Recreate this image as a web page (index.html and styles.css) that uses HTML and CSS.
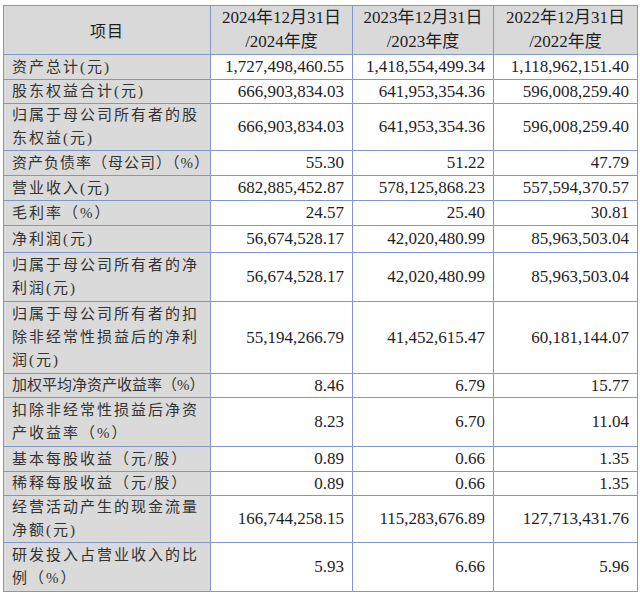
FILE: index.html
```html
<!DOCTYPE html>
<html lang="zh-CN">
<head>
<meta charset="utf-8">
<title>主要财务数据</title>
<link rel="stylesheet" href="styles.css">
</head>
<body>
<div class="page">
<table class="fin">
  <colgroup>
    <col class="c-item">
    <col class="c-num">
    <col class="c-num2">
    <col class="c-num3">
  </colgroup>
  <thead>
    <tr class="head-row">
      <th class="th-item">项目</th>
      <th class="th-year">2024年12月31日<br>/2024年度</th>
      <th class="th-year">2023年12月31日<br>/2023年度</th>
      <th class="th-year">2022年12月31日<br>/2022年度</th>
    </tr>
  </thead>
  <tbody>
    <tr class="h25"><td class="item">资产总计(元)</td><td class="num">1,727,498,460.55</td><td class="num">1,418,554,499.34</td><td class="num">1,118,962,151.40</td></tr>
    <tr class="h23"><td class="item">股东权益合计(元)</td><td class="num">666,903,834.03</td><td class="num">641,953,354.36</td><td class="num">596,008,259.40</td></tr>
    <tr class="h45"><td class="item">归属于母公司所有者的股<br>东权益(元)</td><td class="num">666,903,834.03</td><td class="num">641,953,354.36</td><td class="num">596,008,259.40</td></tr>
    <tr class="h25"><td class="item tight1">资产负债率（母公司）（%）</td><td class="num">55.30</td><td class="num">51.22</td><td class="num">47.79</td></tr>
    <tr class="h25"><td class="item">营业收入(元)</td><td class="num">682,885,452.87</td><td class="num">578,125,868.23</td><td class="num">557,594,370.57</td></tr>
    <tr class="h25"><td class="item">毛利率（%）</td><td class="num">24.57</td><td class="num">25.40</td><td class="num">30.81</td></tr>
    <tr class="h27"><td class="item">净利润(元)</td><td class="num">56,674,528.17</td><td class="num">42,020,480.99</td><td class="num">85,963,503.04</td></tr>
    <tr class="h49"><td class="item">归属于母公司所有者的净<br>利润(元)</td><td class="num">56,674,528.17</td><td class="num">42,020,480.99</td><td class="num">85,963,503.04</td></tr>
    <tr class="h72"><td class="item">归属于母公司所有者的扣<br>除非经常性损益后的净利<br>润(元)</td><td class="num">55,194,266.79</td><td class="num">41,452,615.47</td><td class="num">60,181,144.07</td></tr>
    <tr class="h24"><td class="item tight0">加权平均净资产收益率（%）</td><td class="num">8.46</td><td class="num">6.79</td><td class="num">15.77</td></tr>
    <tr class="h49"><td class="item">扣除非经常性损益后净资<br>产收益率（%）</td><td class="num">8.23</td><td class="num">6.70</td><td class="num">11.04</td></tr>
    <tr class="h25"><td class="item">基本每股收益（元/股）</td><td class="num">0.89</td><td class="num">0.66</td><td class="num">1.35</td></tr>
    <tr class="h24"><td class="item">稀释每股收益（元/股）</td><td class="num">0.89</td><td class="num">0.66</td><td class="num">1.35</td></tr>
    <tr class="h47"><td class="item">经营活动产生的现金流量<br>净额(元)</td><td class="num">166,744,258.15</td><td class="num">115,283,676.89</td><td class="num">127,713,431.76</td></tr>
    <tr class="h49"><td class="item">研发投入占营业收入的比<br>例（%）</td><td class="num">5.93</td><td class="num">6.66</td><td class="num">5.96</td></tr>
  </tbody>
</table>
</div>
</body>
</html>
```
FILE: styles.css
```css
html, body {
  margin: 0;
  padding: 0;
  background: #ffffff;
}

.page {
  padding: 5px 0 0 3px;
}

.fin {
  border-collapse: collapse;
  table-layout: fixed;
  width: 634px;
  font-family: "Liberation Serif", "Noto Sans CJK SC", serif;
  font-size: 17px;
  color: #1e1e1e;
}

.c-item { width: 207px; }
.c-num  { width: 142px; }
.c-num2 { width: 141px; }
.c-num3 { width: 144px; }

.fin th,
.fin td {
  border: 1px solid #8097cc;
  padding: 0;
  vertical-align: middle;
}

.head-row { height: 48px; }

.fin th {
  background: #d9d9d9;
  font-weight: normal;
  line-height: 24px;
  text-align: center;
}

.th-item {
  font-family: "Noto Sans CJK SC", sans-serif;
  font-weight: bold;
  font-size: 16px;
  letter-spacing: 1px;
}

.fin td.item {
  background: #dadada;
  text-align: left;
  padding: 0 4px 0 8px;
  font-size: 15px;
  letter-spacing: 2px;
  line-height: 23px;
  white-space: nowrap;
  color: #333333;
}

.fin td.item.tight1 { letter-spacing: 1px; }
.fin td.item.tight0 { letter-spacing: 0; }

.fin td.num {
  background: #ffffff;
  text-align: right;
  padding: 0 8px 0 4px;
  white-space: nowrap;
}

.h23 { height: 23px; }
.h24 { height: 24px; }
.h25 { height: 25px; }
.h27 { height: 27px; }
.h45 { height: 45px; }
.h47 { height: 47px; }
.h49 { height: 49px; }
.h72 { height: 72px; }
```
